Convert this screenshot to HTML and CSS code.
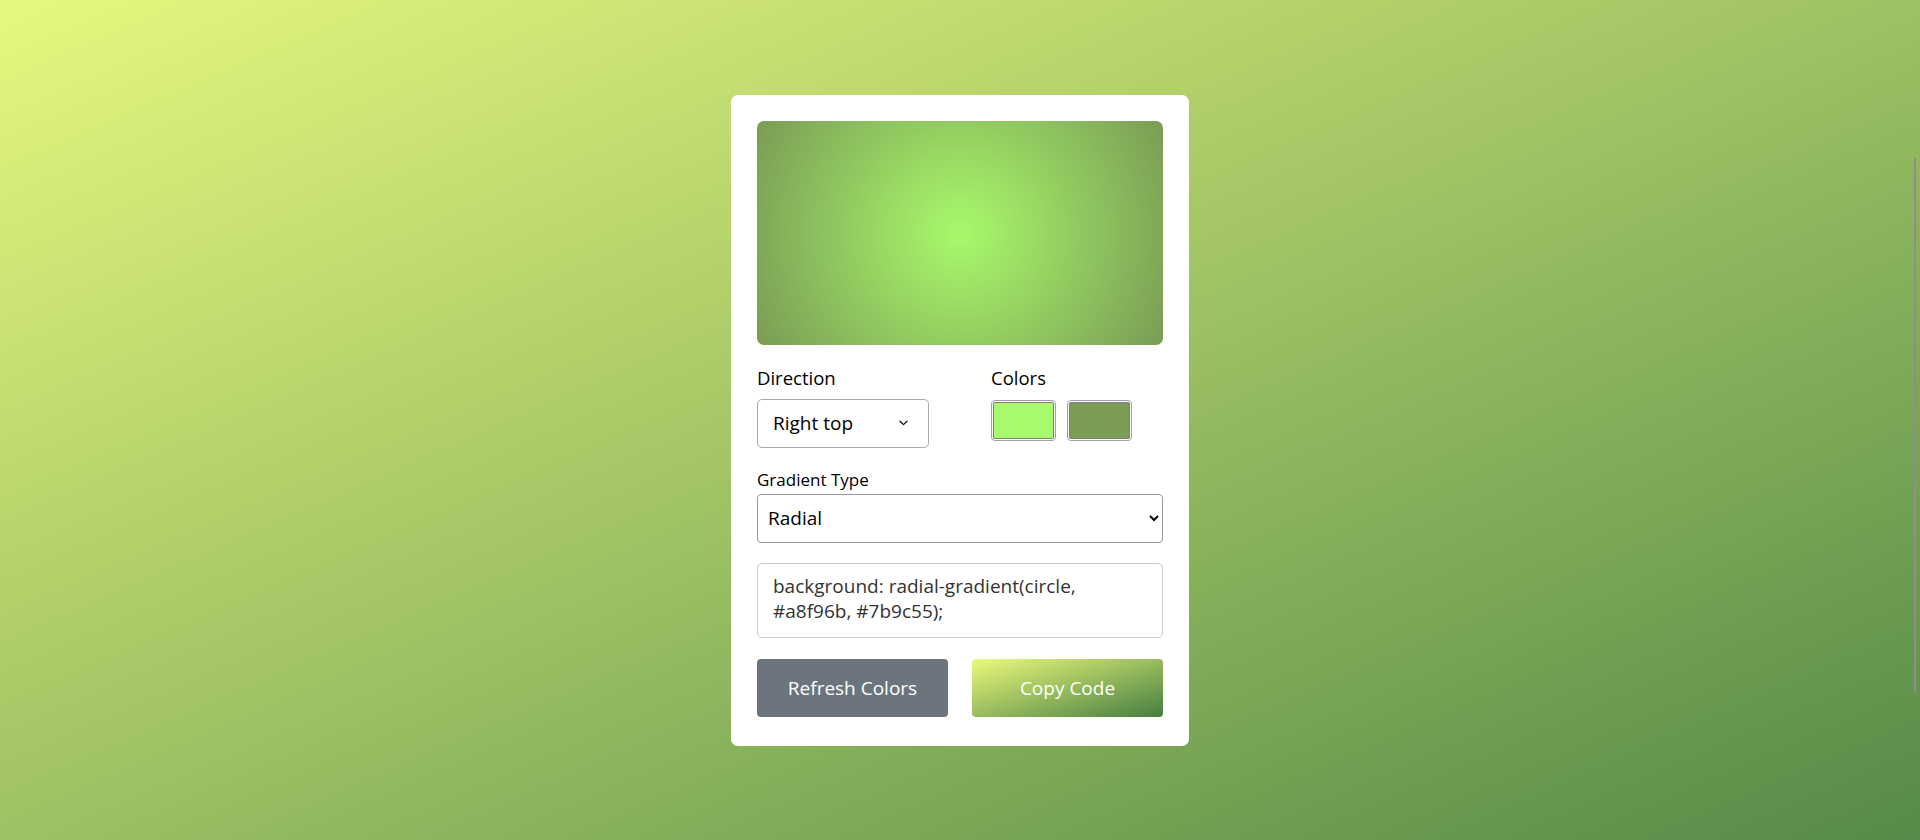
FILE: index.html
```html
<!DOCTYPE html>
<html lang="en">
<head>
<meta charset="utf-8">
<title>Gradient Generator</title>
<link rel="stylesheet" href="styles.css">
</head>
<body>
  <main class="card">
    <div class="preview"></div>
    <div class="options">
      <div class="field direction">
        <p class="label">Direction</p>
        <div class="select-wrap">
          <select class="select-box">
            <option>Right top</option>
          </select>
          <svg class="chevron" width="9" height="6" viewBox="0 0 9 6" aria-hidden="true">
            <path d="M1 1.2 L4.5 4.6 L8 1.2" fill="none" stroke="#111" stroke-width="1.3" stroke-linecap="round" stroke-linejoin="round"/>
          </svg>
        </div>
      </div>
      <div class="field colors">
        <p class="label">Colors</p>
        <div class="swatches">
          <span class="swatch"><span class="chip chip-a"></span></span>
          <span class="swatch"><span class="chip chip-b"></span></span>
        </div>
      </div>
    </div>
    <div class="type-field">
      <label class="type-label">Gradient Type</label>
      <select class="type-select">
        <option>Radial</option>
      </select>
    </div>
    <div class="code">background: radial-gradient(circle, #a8f96b, #7b9c55);</div>
    <div class="buttons">
      <button class="btn refresh">Refresh Colors</button>
      <button class="btn copy">Copy Code</button>
    </div>
  </main>
  <div class="scroll-thumb"></div>
</body>
</html>
```

FILE: styles.css
```css
* {
  box-sizing: border-box;
}

html, body {
  margin: 0;
  height: 100%;
}

body {
  min-height: 100vh;
  display: flex;
  align-items: center;
  justify-content: center;
  background: linear-gradient(to bottom right, #e6f87e, #558a48);
  font-family: "Open Sans", "Liberation Sans", sans-serif;
  overflow: hidden;
}

.card {
  width: 458px;
  background: #fff;
  border-radius: 7px;
  padding: 26px 26px 29px;
  display: flex;
  flex-direction: column;
}

.preview {
  height: 224px;
  border-radius: 7px;
  background: radial-gradient(circle, #a8f96b, #7b9c55);
}

.options {
  display: flex;
  margin-top: 19px;
}

.field.direction {
  width: 234px;
  flex: none;
}

.label {
  margin: 0 0 7px;
  font-size: 18.5px;
  line-height: 28px;
  color: #000;
}

.select-wrap {
  position: relative;
  width: 172px;
}

.select-box {
  appearance: none;
  -webkit-appearance: none;
  display: block;
  width: 172px;
  height: 49px;
  border: 1px solid #aaa;
  border-radius: 5px;
  background: #fff;
  font-family: inherit;
  font-size: 19px;
  color: #000;
  padding: 0 30px 0 15px;
  outline: none;
}

.chevron {
  position: absolute;
  right: 21px;
  top: 21px;
  pointer-events: none;
}

.swatches {
  display: flex;
  gap: 11px;
  padding-top: 1px;
}

.swatch {
  width: 65px;
  height: 41px;
  border: 1px solid #a19dac;
  border-radius: 4px;
  padding: 1px;
  display: flex;
}

.chip {
  flex: 1;
  border: 1px solid #7d7d7d;
  border-radius: 2px;
}

.chip-a {
  background: #a8f96b;
}

.chip-b {
  background: #7b9c55;
}

.type-field {
  display: flex;
  flex-direction: column;
  margin-top: 20px;
}

.type-label {
  font-size: 17px;
  line-height: 24px;
  color: #000;
  margin-bottom: 2px;
}

.type-select {
  height: 49px;
  border: 1px solid #9b9b9b;
  border-radius: 4px;
  background: #fff;
  font-family: inherit;
  font-size: 19px;
  color: #000;
  padding: 0 6px;
  outline: none;
}

.code {
  margin-top: 20px;
  height: 75px;
  border: 1px solid #ccc;
  border-radius: 5px;
  padding: 10px 40px 10px 15px;
  font-size: 19px;
  line-height: 25px;
  color: #333;
}

.buttons {
  display: flex;
  gap: 24px;
  margin-top: 21px;
}

.btn {
  flex: 1;
  height: 58px;
  border: none;
  border-radius: 4px;
  font-family: inherit;
  font-size: 19px;
  color: #fff;
}

.refresh {
  background: #6c757d;
}

.copy {
  background: linear-gradient(to bottom right, #ebfa7b, #467e41);
}

.scroll-thumb {
  position: fixed;
  right: 4px;
  top: 158px;
  width: 2px;
  height: 535px;
  background: #8d8f88;
}
```
